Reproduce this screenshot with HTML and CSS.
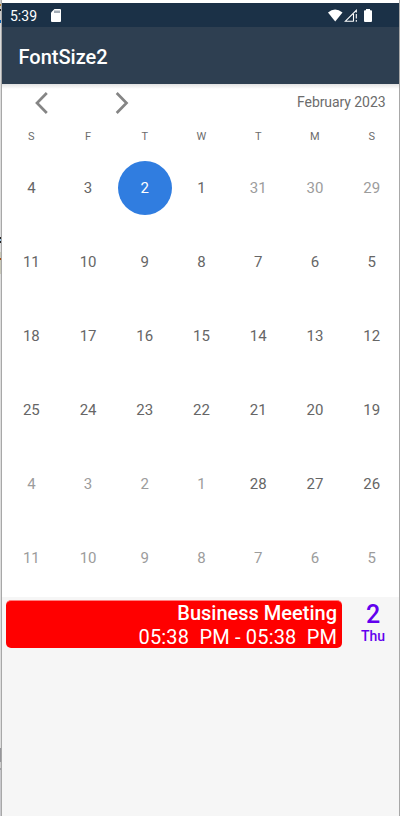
FILE: index.html
```html
<!DOCTYPE html>
<html lang="en">
<head>
<meta charset="utf-8">
<title>FontSize2</title>
<link rel="stylesheet" href="styles.css">
</head>
<body>
<div class="phone">
  <div class="status">
    <span class="clock">5:39</span>
    <svg class="sd" width="10" height="13" viewBox="0 0 10 13"><path fill="#fff" d="M3.5 0H9Q10 0 10 1V12Q10 13 9 13H1Q0 13 0 12V3.5Z"/><path stroke="#1b3147" stroke-width=".8" d="M4 1.5V4M6 1.5V4M8 1.5V4"/></svg>
    <svg class="signals" width="46" height="14" viewBox="0 0 46 14"><path fill="#fff" d="M0 3.5Q7-2.5 14.5 3.5L7.2 12.5Z"/><path fill="none" stroke="#fff" stroke-width="1.1" d="M25.5 12.2H17.4L28.3 1.3V3.5M25.5 12.5V5"/><path stroke="#fff" stroke-width="1.1" d="M28.3 5V9.5M28.3 11V12.7"/><path fill="#fff" d="M36 2Q36 1.3 37 1.3H38V0H42V1.3H43Q44 1.3 44 2V12Q44 13 43 13H37Q36 13 36 12Z"/></svg>
  </div>
  <header class="appbar">FontSize2</header>
  <main class="calendar">
    <div class="nav">
      <svg class="prev" width="14" height="22" viewBox="0 0 14 22"><path d="M12.8 1L3 11L12.8 21"/></svg>
      <svg class="next" width="14" height="22" viewBox="0 0 14 22"><path d="M1.7 1L11.5 11L1.7 21"/></svg>
      <span class="month">February 2023</span>
    </div>
    <div class="week names"><span>S</span><span>F</span><span>T</span><span>W</span><span>T</span><span>M</span><span>S</span></div>
    <div class="week"><span>4</span><span>3</span><span class="selected">2</span><span>1</span><span class="out">31</span><span class="out">30</span><span class="out">29</span></div>
    <div class="week"><span>11</span><span>10</span><span>9</span><span>8</span><span>7</span><span>6</span><span>5</span></div>
    <div class="week"><span>18</span><span>17</span><span>16</span><span>15</span><span>14</span><span>13</span><span>12</span></div>
    <div class="week"><span>25</span><span>24</span><span>23</span><span>22</span><span>21</span><span>20</span><span>19</span></div>
    <div class="week"><span class="out">4</span><span class="out">3</span><span class="out">2</span><span class="out">1</span><span>28</span><span>27</span><span>26</span></div>
    <div class="week"><span class="out">11</span><span class="out">10</span><span class="out">9</span><span class="out">8</span><span class="out">7</span><span class="out">6</span><span class="out">5</span></div>
  </main>
  <section class="agenda">
    <div class="event">
      <div class="title">Business Meeting</div>
      <div class="time">05:38&nbsp; PM - 05:38&nbsp; PM</div>
    </div>
    <div class="date"><div class="num">2</div><div class="day">Thu</div></div>
  </section>
</div>
</body>
</html>
```
FILE: styles.css
```css
* { box-sizing: border-box; }
body {
  margin: 0;
  height: 816px;
  overflow: hidden;
  padding-left: 1px;
  background: linear-gradient(#ccc 0 4px, #b08030 4px 6px, #ccc 6px 9px, #222 9px 11px, #ccc 11px 20px, #0b63b5 20px 23px, #dcdcdc 23px 237px, #222 237px 239px, #9cc8e8 239px 241px, #222 241px 243px, #ddd 243px 252px, #c8c8b8 252px 258px, #a54b12 258px 260px, #c8c8b8 260px 274px, #ddd 274px 748px, #97979b 748px 762px, #ccc 762px 768px, #a0a0a4 768px 770px, #c8c8cc 770px);
  font-family: Roboto, sans-serif;
}
.phone {
  width: 399px;
  height: 816px;
  border: solid #a8a8a8;
  border-width: 0 1px;
  padding-top: 3px;
  background: #fff;
  display: flex;
  flex-direction: column;
}
.status {
  height: 24px;
  background: #1b3147;
  color: #fff;
  display: flex;
  align-items: center;
  padding: 1px 25px 0 8px;
}
.clock { font-size: 14px; width: 41px; }
.signals { margin-left: auto; }
.appbar {
  height: 57px;
  background: #2e3f51;
  color: #fff;
  font-size: 20px;
  font-weight: 500;
  line-height: 60px;
  padding-left: 16.5px;
}
.calendar {
  height: 513px;
  background: linear-gradient(#e2e2e2, #fff 5px);
}
.nav {
  height: 37px;
  display: flex;
  align-items: center;
  padding: 0 13.5px 0 32px;
}
.nav svg { fill: none; stroke: #858585; stroke-width: 2.7; }
.next { margin-left: 67px; }
.month {
  margin-left: auto;
  font-size: 14px;
  letter-spacing: -0.07px;
  color: #6c6c6c;
  line-height: 16px;
  padding-bottom: 2px;
}
.week {
  height: 74px;
  margin-left: 1px;
  margin-right: -1px;
  display: grid;
  grid-template-columns: repeat(7, 1fr);
  place-items: center;
  font-size: 15px;
  line-height: 18px;
  color: #666;
}
.names { height: 29px; font-size: 11px; color: #6c6c6c; padding-top: 2px; }
.out { color: #9c9c9c; }
.selected {
  width: 54px;
  height: 54px;
  border-radius: 50%;
  background: #307de0;
  color: #fff;
  text-align: center;
  line-height: 54px;
}
.names ~ .week { padding-top: 1px; }
.agenda {
  flex: 1;
  background: #f6f6f6;
  display: flex;
  align-items: flex-start;
  padding: 3px 0 0 4px;
}
.event {
  width: 336px;
  height: 48px;
  border-radius: 5px;
  border: solid #ff8080;
  border-width: 1px 0 0;
  background: #f00;
  color: #fff;
  text-align: right;
  padding-right: 5px;
  font-size: 20px;
  line-height: 24px;
}
.title { font-weight: 500; }
.time { letter-spacing: 0.17px; margin-right: -0.17px; }
.date { width: 57px; color: #6200ee; text-align: center; padding-left: 5px; }
.num { font-size: 25px; line-height: 30px; font-weight: 500; }
.day { font-size: 14px; line-height: 12px; font-weight: 500; }
```
